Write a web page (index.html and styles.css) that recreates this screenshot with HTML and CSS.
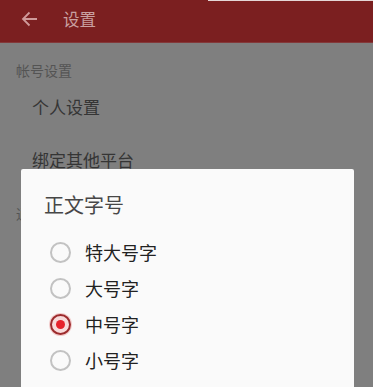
FILE: index.html
```html
<!DOCTYPE html>
<html lang="zh-CN">
<head>
<meta charset="utf-8">
<title>设置</title>
<link rel="stylesheet" href="styles.css">
</head>
<body>
<div class="screen">
  <header class="appbar">
    <svg class="back" width="17" height="16" viewBox="0 0 17 16" aria-hidden="true">
      <path d="M16 8H2M8.5 1.5L2 8l6.5 6.5" fill="none" stroke="currentColor" stroke-width="1.8"/>
    </svg>
    <span class="appbar-title">设置</span>
  </header>
  <main class="content">
    <div class="section-head">帐号设置</div>
    <div class="item">个人设置</div>
    <div class="item">绑定其他平台</div>
    <div class="section-head">通</div>
  </main>
  <div class="dialog">
    <div class="dialog-title">正文字号</div>
    <ul class="options">
      <li class="option"><span class="radio"></span><span class="label">特大号字</span></li>
      <li class="option"><span class="radio"></span><span class="label">大号字</span></li>
      <li class="option"><span class="radio checked"></span><span class="label">中号字</span></li>
      <li class="option"><span class="radio"></span><span class="label">小号字</span></li>
    </ul>
  </div>
</div>
</body>
</html>
```
FILE: styles.css
```css
html, body {
  margin: 0;
  padding: 0;
  height: 100%;
  overflow: hidden;
}
body {
  background: #7f7f7f;
  font-family: "Noto Sans CJK SC", "Noto Sans", sans-serif;
}
.screen {
  position: relative;
  height: 387px;
  overflow: hidden;
}
.appbar {
  height: 43px;
  display: flex;
  align-items: center;
  background: linear-gradient(to right, #7b1f20 208px, #e4d6d6 208px) top left / 100% 1px no-repeat, #7b1f20;
  border-bottom: 1px solid #83393a;
  box-sizing: border-box;
  padding-left: 21px;
  padding-bottom: 4px;
  color: #c9a2a2;
}
.back {
  display: block;
  color: #cf9a9a;
}
.appbar-title {
  margin-left: 25px;
  font-size: 16.5px;
  line-height: 20px;
  color: #c9a0a0;
}
.content {
  padding-top: 15px;
}
.section-head {
  padding-left: 16px;
  font-size: 14px;
  line-height: 24px;
  color: #545454;
  margin-bottom: 13px;
}
.item {
  padding-left: 32px;
  font-size: 17px;
  line-height: 24px;
  color: #353535;
  margin-bottom: 29px;
}
.dialog {
  position: absolute;
  left: 21px;
  top: 169px;
  width: 333px;
  height: 240px;
  background: #fafafa;
  border-radius: 2px;
  box-sizing: border-box;
  padding-top: 22px;
}
.dialog-title {
  padding-left: 23px;
  font-size: 20px;
  line-height: 28px;
  color: #474747;
}
.options {
  list-style: none;
  margin: 0;
  padding: 15px 0 0 0;
}
.option {
  height: 36px;
  display: flex;
  align-items: center;
  padding-left: 29px;
}
.radio {
  width: 21px;
  height: 21px;
  box-sizing: border-box;
  border: 2px solid #c2c2c2;
  border-radius: 50%;
  display: flex;
  align-items: center;
  justify-content: center;
  flex: none;
}
.radio.checked {
  border-color: #9c2b2d;
  background: #f8dada;
  box-shadow: 0 0 0 1px rgba(230, 120, 120, 0.35);
}
.radio.checked::after {
  content: "";
  width: 9px;
  height: 9px;
  border-radius: 50%;
  background: #e6222b;
}
.label {
  margin-left: 14px;
  font-size: 18px;
  line-height: 24px;
  color: #222222;
}
```
